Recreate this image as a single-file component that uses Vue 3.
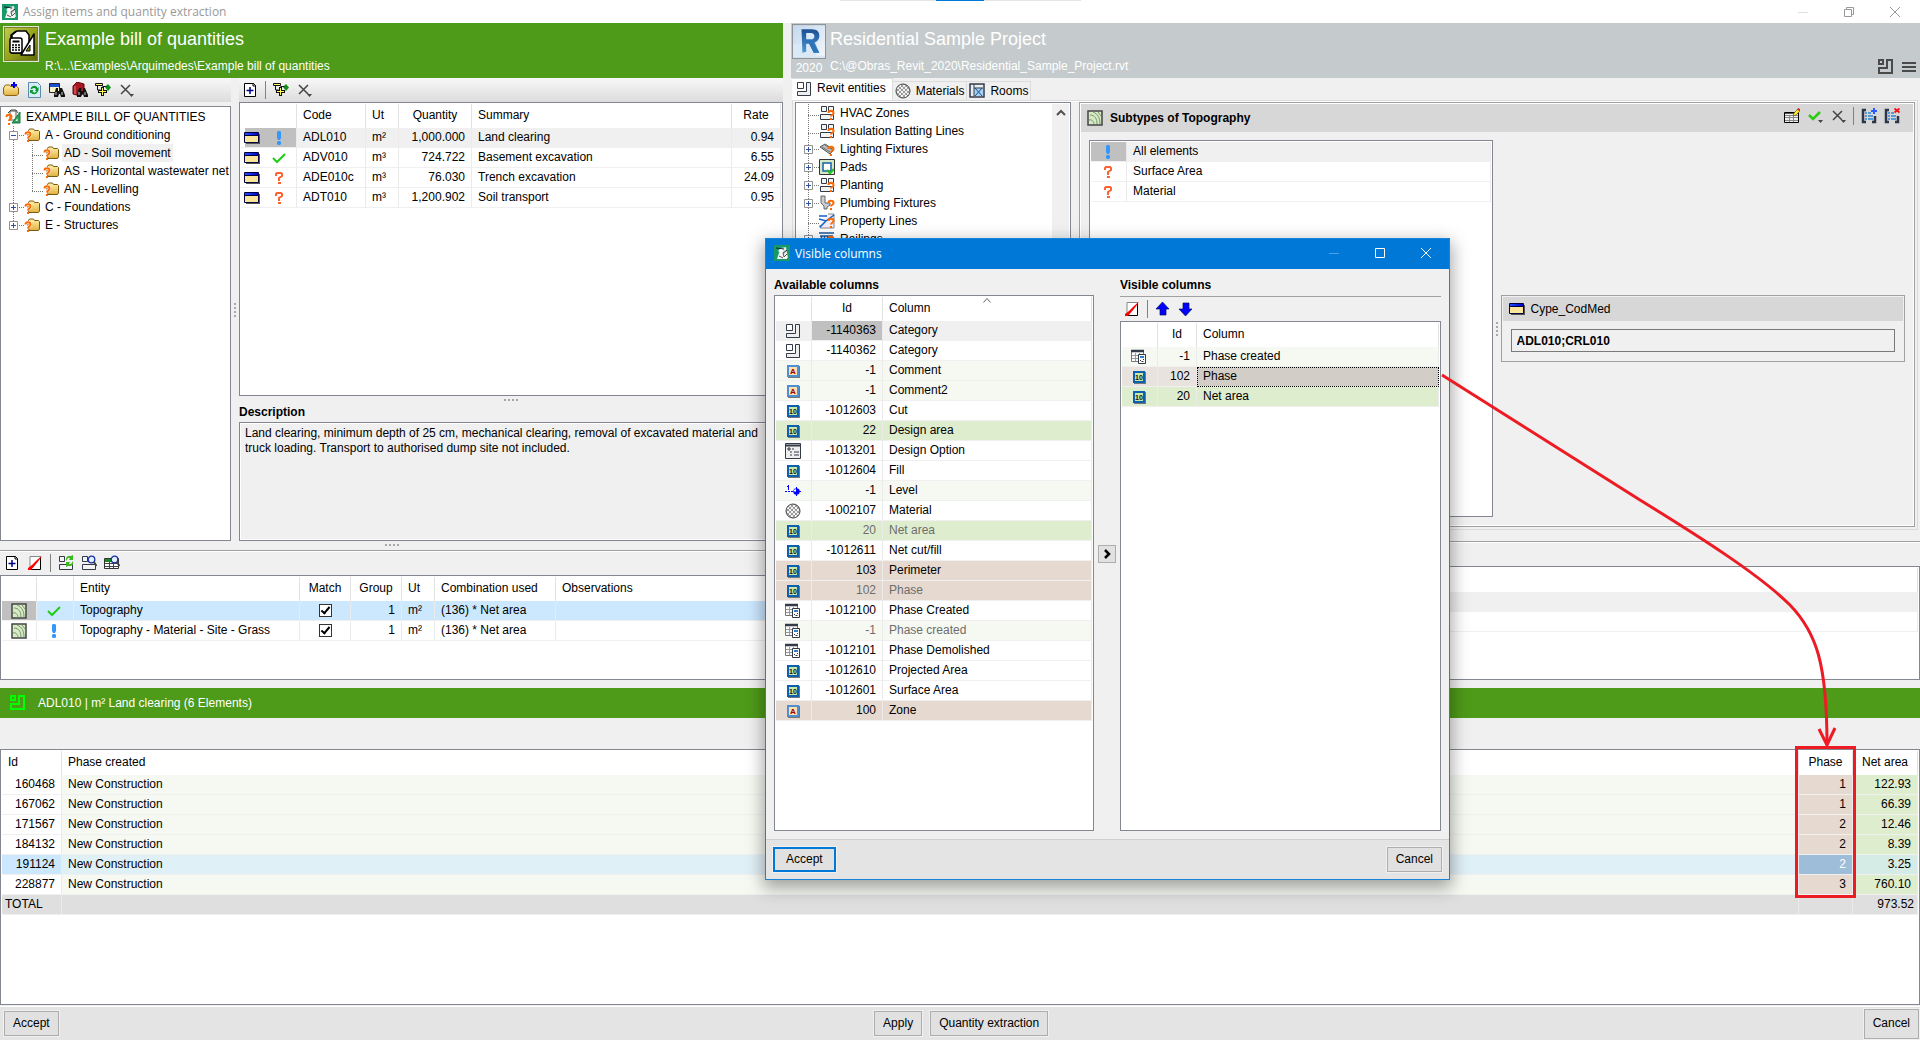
<script setup>
import { ref } from 'vue'

const budgetTools = [
  ['folder-add', 'New chapter'], ['refresh', 'Refresh'], ['find-table', 'Find item'],
  ['find-book', 'Find in catalogue'], ['tree-add', 'Expand tree'], ['clear', 'Clear']
]
const itemTools = [['page-add', 'New item'], null, ['tree-add', 'Expand items'], ['clear', 'Clear']]
const subtypeTools = [['grid-edit', 'Edit table'], ['tick-menu', 'Mark'], ['clear', 'Clear'], null, ['list-add', 'Add columns'], ['list-del', 'Remove columns']]
const entityTools = [['page-add', 'Add entity'], ['page-del', 'Remove entity'], null, ['cat-sync', 'Update'], ['cat-find', 'Find category'], ['table-find', 'Find in table']]
const columnTools = [['page-del', 'Remove column'], null, ['up', 'Move up'], ['down', 'Move down']]

const chapters = [
  { guides: [], icon: 'bill', text: 'EXAMPLE BILL OF QUANTITIES' },
  { guides: ['g-minus'], icon: 'folder-q', text: 'A - Ground conditioning' },
  { guides: ['g-line', 'g-tee'], icon: 'folder-q', text: 'AD - Soil movement', active: true },
  { guides: ['g-line', 'g-tee'], icon: 'folder-q', text: 'AS - Horizontal wastewater net' },
  { guides: ['g-line', 'g-end'], icon: 'folder-q', text: 'AN - Levelling' },
  { guides: ['g-plus'], icon: 'folder-q', text: 'C - Foundations' },
  { guides: ['g-plus-end'], icon: 'folder-q', text: 'E - Structures' }
]
const categories = [
  ['g-tee', 'cat-q', 'HVAC Zones'], ['g-tee', 'cat-q', 'Insulation Batting Lines'],
  ['g-plus', 'light-q', 'Lighting Fixtures'], ['g-plus', 'pad', 'Pads'], ['g-plus', 'cat-q', 'Planting'],
  ['g-plus', 'plumb-q', 'Plumbing Fixtures'], ['g-tee', 'prop-q', 'Property Lines'], ['g-plus', 'rail-q', 'Railings']
]
const items = [
  ['excl', 'ADL010', 'm²', '1,000.000', 'Land clearing', '0.94'],
  ['tick', 'ADV010', 'm³', '724.722', 'Basement excavation', '6.55'],
  ['quest', 'ADE010c', 'm³', '76.030', 'Trench excavation', '24.09'],
  ['quest', 'ADT010', 'm³', '1,200.902', 'Soil transport', '0.95']
]
const subtypes = [['excl', 'All elements'], ['quest', 'Surface Area'], ['quest', 'Material']]
const entities = ref([
  { state: 'tick', name: 'Topography', match: true, group: 1, ut: 'm²', comb: '(136) * Net area' },
  { state: 'excl', name: 'Topography - Material - Site - Grass', match: true, group: 1, ut: 'm²', comb: '(136) * Net area' }
])
const elements = [
  ['160468', '1', '122.93'], ['167062', '1', '66.39'], ['171567', '2', '12.46'],
  ['184132', '2', '8.39'], ['191124', '2', '3.25'], ['228877', '3', '760.10']
]
const available = [
  ['cat', '-1140363', 'Category', 'current'], ['cat', '-1140362', 'Category', ''],
  ['alpha', '-1', 'Comment', 'pale'], ['alpha', '-1', 'Comment2', 'pale'],
  ['num', '-1012603', 'Cut', ''], ['num', '22', 'Design area', 'green'],
  ['option', '-1013201', 'Design Option', ''], ['num', '-1012604', 'Fill', ''],
  ['level', '-1', 'Level', 'pale'], ['sphere', '-1002107', 'Material', ''],
  ['num', '20', 'Net area', 'green used'], ['num', '-1012611', 'Net cut/fill', ''],
  ['num', '103', 'Perimeter', 'brown'], ['num', '102', 'Phase', 'brown used'],
  ['phase', '-1012100', 'Phase Created', ''], ['phase', '-1', 'Phase created', 'pale used'],
  ['phase', '-1012101', 'Phase Demolished', ''], ['num', '-1012610', 'Projected Area', ''],
  ['num', '-1012601', 'Surface Area', ''], ['alpha', '100', 'Zone', 'brown']
]
const visible = [
  ['phase', '-1', 'Phase created', 'pale'], ['num', '102', 'Phase', 'focus'], ['num', '20', 'Net area', 'green']
]
const codMed = ref('ADL010;CRL010')
const description = 'Land clearing, minimum depth of 25 cm, mechanical clearing, removal of excavated material and truck loading. Transport to authorised dump site not included.'
</script>

<template>
  <div class="app">
    <svg class="sprite" aria-hidden="true">
      <defs>
        <linearGradient id="gFolder" x1="0" y1="0" x2="0" y2="1"><stop offset="0" stop-color="#fff0a8" /><stop offset="1" stop-color="#e0b040" /></linearGradient>
        <linearGradient id="gOlive" x1="0" y1="0" x2="1" y2="1"><stop offset="0" stop-color="#c0cc50" /><stop offset=".5" stop-color="#98a41c" /><stop offset="1" stop-color="#5c6808" /></linearGradient>
        <linearGradient id="gR" x1="0" y1="0" x2="0" y2="1"><stop offset="0" stop-color="#1c4e92" /><stop offset="1" stop-color="#4d9ad8" /></linearGradient>
        <linearGradient id="gSky" x1="0" y1="0" x2="1" y2="1"><stop offset="0" stop-color="#c4d8ee" /><stop offset="1" stop-color="#f2f7fc" /></linearGradient>
        <linearGradient id="gBlue" x1="0" y1="0" x2="1" y2="0"><stop offset="0" stop-color="#2050ff" /><stop offset="1" stop-color="#0000c8" /></linearGradient>
        <pattern id="pDots" width="4" height="4" patternUnits="userSpaceOnUse"><rect width="4" height="4" fill="#f4f4f4" /><path d="M0 0h2v2h-2zM2 2h2v2h-2z" fill="#9a9a9a" /></pattern>

        <symbol id="logo" viewBox="0 0 16 16"><rect width="16" height="16" fill="#159a68" /><path d="M7 3l5-1 2 11H5z" fill="#dfe9e4" /><path d="M2 3l8 1M8 9l5-4" stroke="#123" stroke-width="1" /><circle cx="6.500" cy="6" r="2" fill="#fff" /><path d="M3 14l2-6h4l1 3 3-3v6z" fill="#f4f7f5" /><path d="M9 8l1 4 3-3M5 11l4 2" fill="none" stroke="#555" /></symbol>
        <symbol id="calc" viewBox="0 0 36 36"><rect width="36" height="36" fill="#dfe3d8" /><rect x="1.500" y="1.500" width="33" height="33" fill="url(#gOlive)" stroke="#77822a" /><path d="M9 9l5-4h9l3 4v18H9z" fill="#fff" stroke="#000" stroke-width="1.500" /><path d="M8 12V9l5-4" fill="none" stroke="#000" stroke-width="1.500" /><path d="M31 8v21H18z" fill="#fff" stroke="#000" stroke-width="1.500" stroke-linejoin="round" /><path d="M27 19v6h-4z" fill="#8c9818" stroke="#000" /><rect x="7" y="12" width="12" height="15" rx="2" fill="#fff" stroke="#000" stroke-width="1.500" /><path d="M9.500 15.500h7" stroke="#000" stroke-width="2" /><path d="M9 19h2M12 19h2M15 19h2M9 21.500h2M12 21.500h2M15 21.500h2M9 24h2M12 24h2M15 24h2" stroke="#000" stroke-width="1.300" /></symbol>
        <symbol id="revit" viewBox="0 0 34 34"><rect width="34" height="34" fill="url(#gSky)" /><path d="M0 20h9V4h16v28h9v2H0z" fill="#dbe8f5" /><path fill-rule="evenodd" d="M9 4h11c6 0 8 3 8 7 0 4-2 6-5 7l5 11h-6l-5-10h-3v9l-4 1zM14 8v7h5c5 0 5-7 0-7z" fill="url(#gR)" /><path d="M14 15h5l9 14h-6l-5-10h-3z" fill="#2d74b8" /></symbol>

        <symbol id="bill" viewBox="0 0 16 16"><path d="M5 2h6v9H5z" fill="#fff" stroke="#555" /><path d="M3 4l3-3h5l2 3" fill="none" stroke="#444" /><path d="M15 3v11H7z" fill="#2fa05a" stroke="#1a7a40" /><path d="M12.500 9v3h-2z" fill="#fff" /><path d="M1.500 8c0-3 5-3 5 0 0 2-2.500 2-2.500 4" fill="none" stroke="#ff6a00" stroke-width="2" /><path d="M3 14h2v2H3z" fill="#ff6a00" /></symbol>
        <symbol id="folder-q" viewBox="0 0 16 16"><path d="M3.500 5l2-3h4l1 1.500h4l1 1V12l-1 1.500H5z" fill="url(#gFolder)" stroke="#7b5a10" /><path d="M1.500 7.500c0-3 5-3 5 0 0 2-2.500 2-2.500 4" fill="none" stroke="#fff" stroke-width="3" /><path d="M1.500 7.500c0-3 5-3 5 0 0 2-2.500 2-2.500 4" fill="none" stroke="#ff6a00" stroke-width="2" /><path d="M3 13h2v2H3z" fill="#ff6a00" /></symbol>
        <symbol id="folder-add" viewBox="0 0 16 16"><path d="M.5 6l2-3h4l1 1.500h6l2 1.500v6l-2 1.500h-11l-2-1.500z" fill="url(#gFolder)" stroke="#8a6414" /><path d="M11 0v6M8 3h6" stroke="#0000e8" stroke-width="2" /></symbol>
        <symbol id="refresh" viewBox="0 0 16 16"><path d="M2.500 .5h9l3 3v12h-12z" fill="#d8edf8" stroke="#5b8aae" /><path d="M4.500 7c1-4 6-4 7-1l1-1v4H9l1-1.500c-1-2-3-2-4-.5zM12 9c-1 4-6 4-7 1.500l-1 1V8h3.500l-1 1.500c1 1.500 3 1.500 4-.5z" fill="#0c9a30" /></symbol>
        <symbol id="binoc" viewBox="0 0 16 16"><path d="M7 6h2v3h2V6h2l3 7v2h-4l-1-3h-1l-1 3H5v-2z" fill="#111" /><path d="M7 10v3M13 10v3" stroke="#ccc" /></symbol>
        <symbol id="find-table" viewBox="0 0 16 16"><path d="M.5 1.500h10v9H.5z" fill="#f6f1c8" stroke="#222" /><path d="M1 2h9v3H1z" fill="#1c50d0" /><use href="#binoc" /></symbol>
        <symbol id="find-book" viewBox="0 0 16 16"><path d="M1 4l4-4 7 2v9l-4 3-7-2z" fill="#a81822" stroke="#600a10" /><path d="M3 4v8" stroke="#e08088" /><use href="#binoc" /></symbol>
        <symbol id="tree-add" viewBox="0 0 16 16"><path d="M10 5l3-3 3 3.500-3 3.500z" fill="#109018" /><path d="M.5 1.500h7v2h-7z" fill="#ffff70" stroke="#111" /><path d="M2.500 4v4h3M7.500 4.500h4" fill="none" stroke="#111" /><path d="M6 5h3v3h3v3H9v3H6v-3H3V8h3z" fill="#111" /><path d="M7.500 6v7M4 9.500h7" stroke="#ffff50" /></symbol>
        <symbol id="clear" viewBox="0 0 16 16"><path d="M3 3l9 9M12 3l-9 9" stroke="#444" stroke-width="1.500" /><path d="M11 12h5l-2.500 3z" fill="#444" /></symbol>
        <symbol id="page-add" viewBox="0 0 16 16"><path d="M2.500 1.500h9l2 2v11h-11z" fill="#fff" stroke="#000" /><path d="M11 1v3h3" fill="none" stroke="#000" /><path d="M8 5v7M4.500 8.500h7" stroke="#000080" stroke-width="1.500" /></symbol>
        <symbol id="page-del" viewBox="0 0 16 16"><path d="M3 1.500h11v12.500H3z" fill="#fff" /><path d="M3 1.500h11M3 1.500V14" stroke="#888" /><path d="M3 14.500h10.500V2" fill="none" stroke="#000" /><path d="M1 15v-2c4-2 8-8 14-12-3 5-7 9-11 14z" fill="#f00" /></symbol>
        <symbol id="grid-edit" viewBox="0 0 16 16"><path d="M.5 4.500h14v10H.5z" fill="#eee" stroke="#000" /><path d="M1 7.500h13M1 9.500h13M1 12.500h13M5.500 7v7M9.500 7v7" stroke="#888" /><path d="M1 5.500h13" stroke="#555" /><path d="M9 8l1-3 4-4 2 2-4 4z" fill="#ffe820" stroke="#333" stroke-width=".5" /><path d="M13 2l1-2 2 1v2z" fill="#d02020" /></symbol>
        <symbol id="tick-menu" viewBox="0 0 16 16"><path d="M2 7l4 4 7-7" fill="none" stroke="#2bc814" stroke-width="2.500" /><path d="M11 12h5l-2.500 3z" fill="#444" /></symbol>
        <symbol id="list-add" viewBox="0 0 16 16"><path d="M5 2H2v12h3M11 14h3V8" fill="none" stroke="#2d3748" stroke-width="2.500" /><path d="M4 5h2M4 8h2M4 11h2M7 5h3M7 8h5M7 11h5" stroke="#2f86d8" stroke-width="1.500" /><path d="M13 0v6M10 3h6" stroke="#2b5cff" stroke-width="2" /></symbol>
        <symbol id="list-del" viewBox="0 0 16 16"><path d="M5 2H2v12h3M11 14h3V8" fill="none" stroke="#2d3748" stroke-width="2.500" /><path d="M4 5h2M4 8h2M4 11h2M7 5h3M7 8h5M7 11h5" stroke="#2f86d8" stroke-width="1.500" /><path d="M10.500 .5l5 4M15.500 .5l-5 4" stroke="#f01010" stroke-width="1.800" /></symbol>
        <symbol id="up" viewBox="0 0 16 16"><path d="M7.500 1L14 8h-3v6H5V8H1z" fill="#00f" stroke="#001060" stroke-width=".7" /></symbol>
        <symbol id="down" viewBox="0 0 16 16"><path d="M7.500 15L14 8h-3V2H5v6H1z" fill="#00f" stroke="#001060" stroke-width=".7" /></symbol>

        <symbol id="cat" viewBox="0 0 16 16"><path d="M1.500 1.500h6v6h-6z" fill="#fff" stroke="#333a48" /><path d="M10.500 1.500h4v13h-13v-4h9z" fill="#eee" stroke="#333a48" /></symbol>
        <symbol id="catbold" viewBox="0 0 16 16"><path d="M1 1h4v4H1zM9 1h5v13H1V9h8z" fill="none" stroke="currentColor" stroke-width="2" /></symbol>
        <symbol id="quads" viewBox="0 0 16 16"><path d="M2.500 1.500h5v5h-5zM9.500 1.500h5v5h-5zM1.500 9.500h13v5h-13z" fill="#f4f4f4" stroke="#333a48" /></symbol>
        <symbol id="qmark" viewBox="0 0 16 16"><path d="M9.500 8c0-3 5-3 5 0 0 2-2.500 1.500-2.500 3.500" fill="none" stroke="#ff6a00" stroke-width="2" /><path d="M11 13h2v2h-2z" fill="#ff6a00" /></symbol>
        <symbol id="cat-q" viewBox="0 0 16 16"><use href="#quads" /><use href="#qmark" /></symbol>
        <symbol id="light-q" viewBox="0 0 16 16"><path d="M1 6l5-3 9 6-4 4z" fill="#b8bcc0" stroke="#555" /><path d="M3 6l8 5M6 4l8 5" stroke="#777" /><use href="#qmark" /></symbol>
        <symbol id="pad" viewBox="0 0 16 16"><path d="M.5 .5h15v15H.5z" fill="#d4e8c4" stroke="#333" /><path d="M4 4h8v8H4z" fill="#fff" stroke="#1560a8" stroke-width="1.500" /><path d="M8 11l3 3 4-4" fill="none" stroke="#20c020" stroke-width="2" /></symbol>
        <symbol id="plumb-q" viewBox="0 0 16 16"><path d="M2 1h4v7h5v2l-3 2v2H5v-3L2 8z" fill="#c9ccd0" stroke="#666" /><use href="#qmark" /></symbol>
        <symbol id="prop-q" viewBox="0 0 16 16"><path d="M9 1h6v14H1v-3" fill="#eef" stroke="#888" /><path d="M0 3h8M0 6l7 2 8-6M7 8l-6 6" fill="none" stroke="#1560c0" stroke-width="1.500" /><use href="#qmark" /></symbol>
        <symbol id="rail-q" viewBox="0 0 16 16"><path d="M0 2h15M1 5h13M2.500 5v10M5.500 5v10M8.500 5v10M12.500 5v3" stroke="#1c5a9c" stroke-width="1.500" /><use href="#qmark" /></symbol>
        <symbol id="sphere" viewBox="0 0 16 16"><circle cx="8" cy="8" r="7" fill="url(#pDots)" stroke="#444" /></symbol>
        <symbol id="rooms" viewBox="0 0 16 16"><path d="M1 1h14v13H1z" fill="#e8edf2" stroke="#333a48" stroke-width="1.500" /><path d="M5 5h9v8H5z" fill="#a8d0f4" /><path d="M5 1v12M5 5h9" stroke="#333a48" /><path d="M6 5l7 8M13 5l-7 8" stroke="#1c4f88" /></symbol>
        <symbol id="topo" viewBox="0 0 16 16"><path d="M1 1h14v14H1z" fill="#d6ebc4" stroke="#444" stroke-width="1.500" /><path d="M2 10c3-1 5 2 5 4M3 5c5 0 7 4 7 9M6 2c5 2 7 6 7 12M11 2l3 4" fill="none" stroke="#7a9470" /></symbol>
        <symbol id="win" viewBox="0 0 16 16"><path d="M2 4h14v10H2z" fill="#555" /><path d="M.5 2.500h14v10H.5z" fill="#fbe59a" stroke="#000040" /><path d="M1 3h13v2H1z" fill="url(#gBlue)" /><path d="M1 5.500h13" stroke="#000040" /></symbol>
        <symbol id="excl" viewBox="0 0 16 16"><path d="M6 2l1-1h2l1 1v6l-1 2H7L6 8zM7 11h2l1 1v2l-1 1H7l-1-1v-2z" fill="#3398fb" /></symbol>
        <symbol id="tick" viewBox="0 0 16 16"><path d="M2 8l4 4 8-8" fill="none" stroke="#22cc16" stroke-width="2" /></symbol>
        <symbol id="quest" viewBox="0 0 16 16"><path d="M5 6V4l1-1h4l1 1v2L8 8v3" fill="none" stroke="#fe6230" stroke-width="2" /><path d="M7 12h3v2H7z" fill="#fe6230" /></symbol>
        <symbol id="alpha" viewBox="0 0 16 16"><path d="M3 3h12v12H3z" fill="#777" /><path d="M3 3h10v10H3z" fill="#fddfb0" stroke="#5090d0" stroke-width="2" /><text x="8" y="11" text-anchor="middle" font-family="Liberation Sans, sans-serif" font-size="8" font-weight="bold" fill="#9a0000">A</text></symbol>
        <symbol id="num" viewBox="0 0 16 16"><path d="M3 3h12v12H3z" fill="#777" /><path d="M3 3h10v10H3z" fill="#c8e6a8" stroke="#0c60b0" stroke-width="2" /><text x="8" y="11" text-anchor="middle" font-family="Liberation Sans, sans-serif" font-size="7" font-weight="bold" fill="#111">10</text></symbol>
        <symbol id="option" viewBox="0 0 16 16"><path d="M.5 .5h15v15H.5z" fill="#eee" stroke="#333a48" /><path d="M0 2.500h16" stroke="#333a48" stroke-width="2" /><path d="M3 5h2v2H3zM7 6h2M5 9h2M9 9h5M5 12h2M9 12h5" fill="none" stroke="#333a48" /></symbol>
        <symbol id="level" viewBox="0 0 16 16"><path d="M0 8.500h8" stroke="#00f" stroke-dasharray="2 1" /><path d="M2 3.500h1.500M3.500 2v5" stroke="#00f" /><circle cx="11.500" cy="8.500" r="3.200" fill="#00f" /><path d="M11.500 4v9M7.500 8.500H16" stroke="#00f" /><path d="M11 8.500V6a3 3 0 0 0-2.500 2.500z" fill="#fff" /></symbol>
        <symbol id="phase" viewBox="0 0 16 16"><path d="M.5 1.500h12v11H.5z" fill="#fafafa" stroke="#777" /><path d="M0 2h13" stroke="#333a48" stroke-width="2.500" /><path d="M1 6.500h11M1 9.500h11M4.500 4v8M8.500 4v8" stroke="#999" /><path d="M7.500 5.500h7v9h-7z" fill="#fff" stroke="#333a48" /><path d="M9 8h4" stroke="#2f7fd0" stroke-width="2" /><path d="M9 11.500h1M12 10.500h1M10.500 12.500h2" stroke="#333" /></symbol>
        <symbol id="cat-sync" viewBox="0 0 16 16"><path d="M1.500 1.500h5v5h-5zM1.500 9.500h13v5h-13z" fill="#f4f4f4" stroke="#333a48" /><path d="M8 6V3l2-2h3l2-1v5h-4l1-2h-2zM15 6v3l-2 2h-3l-2 1V7h4l-1 2h2z" fill="#3db81e" /></symbol>
        <symbol id="cat-find" viewBox="0 0 16 16"><path d="M1.500 1.500h5v5h-5zM1.500 9.500h13v5h-13z" fill="#f4f4f4" stroke="#333a48" /><circle cx="10.500" cy="4.500" r="3.300" fill="#e2f0fc" stroke="#1830a8" stroke-width="1.300" /><path d="M13 7l2.500 4" stroke="#444" stroke-width="2" /></symbol>
        <symbol id="table-find" viewBox="0 0 16 16"><path d="M.5 3.500h14v10H.5z" fill="#fff" stroke="#333" /><path d="M1 4h7v3H1z" fill="#109018" /><path d="M1 8.500h13M1 11.500h13M5.500 7v6M9.500 7v6" stroke="#444" /><circle cx="10.500" cy="4.500" r="3.300" fill="#e2f0fc" stroke="#1830a8" stroke-width="1.300" /><path d="M13 7l2.500 4" stroke="#444" stroke-width="2" /></symbol>

        <symbol id="box9" viewBox="0 0 19 18"><path d="M4.500 5.500h8v8h-8z" fill="#fff" stroke="#919191" /><path d="M6 9.500h5" stroke="#3050a0" /></symbol>
        <symbol id="g-line" viewBox="0 0 19 18"><path d="M8.500 0v18" stroke="#777" stroke-dasharray="1 1" /></symbol>
        <symbol id="g-tee" viewBox="0 0 19 18"><path d="M8.500 0v18M8 11.500h11" stroke="#777" stroke-dasharray="1 1" /></symbol>
        <symbol id="g-end" viewBox="0 0 19 18"><path d="M8.500 0v11M8 11.500h11" stroke="#777" stroke-dasharray="1 1" /></symbol>
        <symbol id="g-minus" viewBox="0 0 19 18"><path d="M8.500 0v18M14 9.500h5" stroke="#777" stroke-dasharray="1 1" /><use href="#box9" /></symbol>
        <symbol id="g-plus" viewBox="0 0 19 18"><path d="M8.500 0v18M14 9.500h5" stroke="#777" stroke-dasharray="1 1" /><use href="#box9" /><path d="M8.500 7v5" stroke="#3050a0" /></symbol>
        <symbol id="g-plus-end" viewBox="0 0 19 18"><path d="M8.500 0v5M14 9.500h5" stroke="#777" stroke-dasharray="1 1" /><use href="#box9" /><path d="M8.500 7v5" stroke="#3050a0" /></symbol>
      </defs>
    </svg>

    <header class="titlebar">
      <svg class="ic"><use href="#logo" /></svg>
      <span class="wtitle">Assign items and quantity extraction</span>
      <span class="tabhint"></span>
      <div class="wctl">
        <button aria-label="Minimise" class="faint"><svg viewBox="0 0 10 10"><path d="M0 5.500h10" /></svg></button>
        <button aria-label="Restore"><svg viewBox="0 0 10 10"><path d="M.5 2.500h7v7h-7zM2.500 2V.5h7v7H8" /></svg></button>
        <button aria-label="Close"><svg viewBox="0 0 10 10"><path d="M0 0l10 10M10 0L0 10" /></svg></button>
      </div>
    </header>

    <div class="upper">
      <section class="left">
        <div class="hero green">
          <svg class="ic36"><use href="#calc" /></svg>
          <div class="herotext"><h1>Example bill of quantities</h1><p>R:\...\Examples\Arquimedes\Example bill of quantities</p></div>
        </div>
        <div class="split">
          <div class="col">
            <div class="tb shaded">
              <button v-for="t in budgetTools" :key="t[0]" :aria-label="t[1]"><svg class="ic"><use :href="'#' + t[0]" /></svg></button>
            </div>
            <ul class="box tree chapters">
              <li v-for="c in chapters" :key="c.text">
                <svg v-for="(g, i) in c.guides" :key="i" class="guide"><use :href="'#' + g" /></svg>
                <svg class="ic"><use :href="'#' + c.icon" /></svg>
                <span :class="{ active: c.active }">{{ c.text }}</span>
              </li>
            </ul>
          </div>
          <div class="vgrip"><i></i></div>
          <div class="col">
            <div class="tb shaded">
              <template v-for="(t, i) in itemTools" :key="i">
                <button v-if="t" :aria-label="t[1]"><svg class="ic"><use :href="'#' + t[0]" /></svg></button>
                <hr v-else>
              </template>
            </div>
            <div class="box items">
              <table>
                <colgroup><col class="w56"><col class="w69"><col class="w33"><col class="w73"><col><col class="w49"></colgroup>
                <thead><tr><th></th><th>Code</th><th>Ut</th><th class="c">Quantity</th><th>Summary</th><th class="c">Rate</th></tr></thead>
                <tbody>
                  <tr v-for="(r, i) in items" :key="r[1]" :class="{ current: i === 0 }">
                    <td class="pair" :class="{ mark: i === 0 }"><div><svg class="ic"><use href="#win" /></svg><svg class="ic"><use :href="'#' + r[0]" /></svg></div></td>
                    <td>{{ r[1] }}</td><td>{{ r[2] }}</td><td class="r">{{ r[3] }}</td><td>{{ r[4] }}</td><td class="r">{{ r[5] }}</td>
                  </tr>
                </tbody>
              </table>
            </div>
            <div class="desclabel"><i class="hgrip"></i><label for="desc">Description</label></div>
            <textarea id="desc" class="box desc" readonly :value="description"></textarea>
          </div>
        </div>
        <div class="foot"><i class="hgrip"></i></div>
      </section>

      <section class="right">
        <div class="hero grey">
          <div class="revit"><svg><use href="#revit" /></svg><span>2020</span></div>
          <div class="herotext"><h1>Residential Sample Project</h1><p>C:\@Obras_Revit_2020\Residential_Sample_Project.rvt</p></div>
          <div class="heroctl">
            <button aria-label="Show entities"><svg class="ic"><use href="#catbold" /></svg></button>
            <button aria-label="Menu"><svg class="ic" viewBox="0 0 16 16"><path d="M1 4h14M1 8h14M1 12h14" stroke="#4a4a4a" stroke-width="2" /></svg></button>
          </div>
        </div>
        <div class="tabs" role="tablist">
          <button role="tab" aria-selected="true" class="on"><svg class="ic"><use href="#cat" /></svg>Revit entities</button>
          <button role="tab"><svg class="ic"><use href="#sphere" /></svg>Materials</button>
          <button role="tab"><svg class="ic"><use href="#rooms" /></svg>Rooms</button>
        </div>
        <div class="page">
          <ul class="box tree cats">
            <li v-for="c in categories" :key="c[2]">
              <svg class="guide"><use :href="'#' + c[0]" /></svg><svg class="ic"><use :href="'#' + c[1]" /></svg><span>{{ c[2] }}</span>
            </li>
            <li class="scroll"><svg viewBox="0 0 17 17"><path d="M5 11l4-4 4 4" fill="none" stroke="#505050" stroke-width="2" /></svg></li>
          </ul>
          <div class="sub">
            <div class="subhead">
              <svg class="ic"><use href="#topo" /></svg><strong>Subtypes of Topography</strong>
              <div class="tb">
                <template v-for="(t, i) in subtypeTools" :key="i">
                  <button v-if="t" :aria-label="t[1]"><svg class="ic"><use :href="'#' + t[0]" /></svg></button>
                  <hr v-else>
                </template>
              </div>
            </div>
            <div class="subbody">
              <div class="box">
                <table>
                  <colgroup><col class="w36"><col></colgroup>
                  <tbody>
                    <tr v-for="(s, i) in subtypes" :key="s[1]" :class="{ current: i === 0 }">
                      <td class="c" :class="{ solid: i === 0 }"><svg class="ic"><use :href="'#' + s[0]" /></svg></td><td>{{ s[1] }}</td>
                    </tr>
                  </tbody>
                </table>
              </div>
              <div class="vgrip"><i></i></div>
              <div class="cype">
                <div class="cypehead"><svg class="ic"><use href="#win" /></svg><label for="cod">Cype_CodMed</label></div>
                <input id="cod" v-model="codMed" type="text">
              </div>
            </div>
          </div>
        </div>
      </section>
    </div>

    <div class="middle">
      <section class="ents">
        <div class="tb">
          <template v-for="(t, i) in entityTools" :key="i">
            <button v-if="t" :aria-label="t[1]"><svg class="ic"><use :href="'#' + t[0]" /></svg></button>
            <hr v-else>
          </template>
        </div>
        <div class="box">
          <table>
            <colgroup><col class="w35"><col class="w37"><col class="w226"><col class="w51"><col class="w51"><col class="w33"><col class="w121"><col></colgroup>
            <thead><tr><th></th><th></th><th>Entity</th><th class="c">Match</th><th class="c">Group</th><th>Ut</th><th>Combination used</th><th>Observations</th></tr></thead>
            <tbody>
              <tr v-for="(e, i) in entities" :key="e.name" :class="{ picked: i === 0 }">
                <td class="c" :class="{ solid: i === 0 }"><svg class="ic"><use href="#topo" /></svg></td>
                <td class="c"><svg class="ic"><use :href="'#' + e.state" /></svg></td>
                <td>{{ e.name }}</td>
                <td class="c"><input v-model="e.match" type="checkbox" :aria-label="'Match ' + e.name"></td>
                <td class="r">{{ e.group }}</td><td>{{ e.ut }}</td><td>{{ e.comb }}</td><td></td>
              </tr>
            </tbody>
          </table>
        </div>
      </section>
      <section class="ents raised">
        <div class="tb"></div>
        <div class="box">
          <table>
            <thead><tr><th></th></tr></thead>
            <tbody><tr class="current"><td></td></tr><tr><td></td></tr></tbody>
          </table>
        </div>
      </section>
    </div>

    <div class="band"><svg class="ic"><use href="#catbold" /></svg>ADL010 | m² Land clearing (6 Elements)</div>

    <div class="box elements">
      <table>
        <colgroup><col class="w60"><col><col class="w54"><col class="w65"></colgroup>
        <thead><tr><th>Id</th><th>Phase created</th><th class="c">Phase</th><th class="c">Net area</th></tr></thead>
        <tbody>
          <tr v-for="(e, i) in elements" :key="e[0]" :class="{ sel: i === 4 }">
            <td class="r">{{ e[0] }}</td><td class="pale">New Construction</td><td class="r brown">{{ e[1] }}</td><td class="r green">{{ e[2] }}</td>
          </tr>
          <tr class="total"><td>TOTAL</td><td></td><td></td><td class="r">973.52</td></tr>
        </tbody>
      </table>
    </div>

    <footer class="bar">
      <button class="btn">Accept</button>
      <div class="mid"><button class="btn">Apply</button><button class="btn">Quantity extraction</button></div>
      <button class="btn tall">Cancel</button>
    </footer>

    <div class="dialog" role="dialog" aria-label="Visible columns">
      <div class="dtitle">
        <svg class="ic"><use href="#logo" /></svg><span class="wtitle">Visible columns</span>
        <div class="wctl">
          <button aria-label="Minimise" class="faint"><svg viewBox="0 0 10 10"><path d="M0 5.500h10" /></svg></button>
          <button aria-label="Maximise"><svg viewBox="0 0 10 10"><path d="M.5 .5h9v9h-9z" /></svg></button>
          <button aria-label="Close"><svg viewBox="0 0 10 10"><path d="M0 0l10 10M10 0L0 10" /></svg></button>
        </div>
      </div>
      <div class="dbody">
        <div class="dcol">
          <strong>Available columns</strong>
          <div class="box">
            <table>
              <colgroup><col class="w36"><col class="w71"><col></colgroup>
              <thead><tr><th></th><th class="c">Id</th><th class="sorted">Column<svg viewBox="0 0 8 5"><path d="M.5 4.500l3.500-4 3.500 4" fill="none" stroke="#666" /></svg></th></tr></thead>
              <tbody>
                <tr v-for="(a, i) in available" :key="i" :class="a[3]">
                  <td class="c"><svg class="ic"><use :href="'#' + a[0]" /></svg></td><td class="r" :class="{ solid: i === 0 }">{{ a[1] }}</td><td>{{ a[2] }}</td>
                </tr>
              </tbody>
            </table>
          </div>
        </div>
        <div class="move"><button aria-label="Add column"><svg viewBox="0 0 16 16"><path d="M6 4l4 4-4 4" fill="none" stroke="#000" stroke-width="2.500" /></svg></button></div>
        <div class="dcol">
          <strong>Visible columns</strong>
          <div class="tb ruled">
            <template v-for="(t, i) in columnTools" :key="i">
              <button v-if="t" :aria-label="t[1]"><svg class="ic"><use :href="'#' + t[0]" /></svg></button>
              <hr v-else>
            </template>
          </div>
          <div class="box">
            <table>
              <colgroup><col class="w36"><col class="w39"><col></colgroup>
              <thead><tr><th></th><th class="c">Id</th><th>Column</th></tr></thead>
              <tbody>
                <tr v-for="v in visible" :key="v[1]" :class="v[3]">
                  <td class="c"><svg class="ic"><use :href="'#' + v[0]" /></svg></td><td class="r">{{ v[1] }}</td><td>{{ v[2] }}</td>
                </tr>
              </tbody>
            </table>
          </div>
        </div>
      </div>
      <div class="dfoot"><button class="btn primary">Accept</button><button class="btn">Cancel</button></div>
    </div>

    <svg class="callout" viewBox="0 0 420 540" fill="none" stroke="#ed1c24" stroke-width="3" aria-hidden="true">
      <path d="M2 15L200 140C260 177 320 215 350 245C377 273 387 305 387 385" />
      <path d="M379 369l8 16 8-17" />
      <path d="M356.500 387.500h58v149h-58z" />
    </svg>
  </div>
</template>

<style>
body { margin: 0; }
</style>

<style scoped>
.app {
  position: relative;
  display: grid;
  grid-template-rows: 23px 527fr 138fr 30px 31px 257fr 34px;
  grid-template-columns: minmax(0, 1fr);
  height: 100vh;
  min-height: 940px;
  overflow: hidden;
  background: #f0f0f0;
  color: #000;
  font: 12px/15px "Liberation Sans", Arial, sans-serif;
}
.app * { box-sizing: border-box; }
.sprite { position: absolute; width: 0; height: 0; }
.ic { display: block; flex: none; width: 16px; height: 16px; }
button { margin: 0; padding: 0; border: 0; background: none; color: inherit; font: inherit; }
h1, p, ul { margin: 0; padding: 0; list-style: none; }

.titlebar { position: relative; display: flex; align-items: center; padding-left: 2px; background: #fff; color: #999; }
.wtitle { margin-left: 5px; font-family: "Open Sans", "Noto Sans", sans-serif; }
.tabhint { position: absolute; top: 0; left: 840px; width: 241px; height: 1px; background: linear-gradient(90deg, #e5e5e5 96px, #0078d7 96px 144px, #e5e5e5 144px); }
.wctl { display: flex; gap: 36px; margin-left: auto; padding-right: 20px; }
.wctl button { width: 10px; height: 10px; }
.wctl svg { display: block; width: 10px; height: 10px; fill: none; stroke: currentColor; }
.wctl .faint { opacity: .3; }

.upper { display: grid; grid-template-columns: 783fr 1129fr; gap: 8px; min-height: 0; }
.left, .right, .col { display: flex; flex-direction: column; min-width: 0; min-height: 0; }
.hero { display: flex; flex: none; height: 55px; color: #fff; }
.green.hero { padding: 3px; background: #4e9a19; }
.grey.hero { background: #c5cbcd; padding: 1px; }
.ic36 { width: 36px; height: 36px; }
.herotext { margin-left: 6px; }
.green .herotext { margin-top: -3px; }
.grey .herotext { margin-left: 4px; margin-top: -1px; }
h1 { margin-top: 4px; font-size: 18px; line-height: 24px; font-weight: normal; }
p { margin-top: 8px; }
.revit { width: 34px; }
.revit svg { display: block; width: 34px; height: 35px; border: 1px solid #8c9499; }
.revit span { display: block; margin-top: 2px; text-align: center; }
.heroctl { display: flex; align-items: flex-end; gap: 7px; margin-left: auto; padding: 0 2px 2px 0; color: #4a4a4a; }

.split { display: grid; flex: 1; grid-template-columns: 231fr 8px 544fr; min-height: 0; }
.tb { display: flex; flex: none; align-items: center; gap: 7px; height: 24px; padding-left: 3px; }
.tb hr { width: 1px; height: 18px; margin: 0; border: 0; background: #808080; }
.tb.shaded { padding-bottom: 1px; background: linear-gradient(#f8f8f8, #dcdcdc); }
.box { min-width: 0; min-height: 0; padding: 1px; overflow: hidden; border: 1px solid #828790; background: #fff; }
.chapters { flex: 1; margin-top: 4px; }
.vgrip { display: flex; align-items: center; justify-content: center; }
.vgrip i { width: 2px; height: 14px; background: repeating-linear-gradient(#a8a8a8 0 2px, transparent 2px 4px); }
.hgrip { display: block; width: 14px; height: 2px; margin: 0 auto; background: repeating-linear-gradient(90deg, #a8a8a8 0 2px, transparent 2px 4px); }
.items { flex: 290 1 0; }
.desclabel { flex: none; height: 26px; padding-top: 3px; font-weight: bold; }
.desclabel label { display: block; margin-top: 4px; }
.desc { display: block; flex: 111 1 0; padding: 3px 5px; resize: none; outline: none; background: #f0f0f0; color: inherit; font: inherit; box-shadow: inset 0 0 0 1px #fff; }
.foot { flex: none; height: 9px; padding-top: 3px; }

.tree li { display: flex; align-items: center; height: 18px; padding-left: 3px; white-space: nowrap; }
.tree .guide { flex: none; width: 19px; height: 18px; }
.tree span { margin-left: 3px; padding: 0 2px; line-height: 18px; }
.tree .active { background: #f0f0f0; }

table { width: 100%; table-layout: fixed; border-collapse: separate; border-spacing: 0; }
th, td { padding: 0 6px; overflow: hidden; border-right: 1px solid #ebebeb; font-weight: normal; text-align: left; white-space: nowrap; }
th { height: 24px; padding-bottom: 2px; border-color: #e2e2e2; }
td { height: 20px; border-bottom: 1px solid #f0f0f0; }
.c { padding-right: 0; padding-left: 0; text-align: center; }
.c .ic { margin-left: 9px; }
.r { text-align: right; }
.pair { padding: 0; }
.pair div { display: flex; gap: 11px; padding-left: 3px; }
.w33 { width: 33px; } .w35 { width: 35px; } .w36 { width: 36px; } .w37 { width: 37px; } .w39 { width: 39px; } .w49 { width: 49px; }
.w51 { width: 51px; } .w54 { width: 54px; } .w56 { width: 56px; } .w60 { width: 60px; }
.w65 { width: 65px; } .w69 { width: 69px; } .w71 { width: 71px; } .w73 { width: 73px; } .w121 { width: 121px; } .w226 { width: 226px; }
.current td { background: #f0f0f0; }
.current .mark { background: linear-gradient(90deg, #fff 4px, #c0c0c0 4px); }
.picked td { background: #cce8ff; }
tr td.solid { background: #c0c0c0; }
.pale, .pale td { background: #f6f9f2; }
td.green, .green td { background: #dfedcf; }
.brown, .brown td { background: #e6d9d0; }
.used td { color: #6d6d6d; }

.tabs { display: flex; flex: none; align-items: flex-end; height: 22px; padding-left: 1px; }
.tabs button { display: flex; align-items: center; gap: 5px; height: 19px; padding: 0 2px; border: 1px solid #dcdcdc; border-bottom: 0; border-left: 0; }
.tabs .on { height: 22px; padding: 0 6px 2px 4px; background: #fff; }
.page { display: grid; flex: 1; grid-template-columns: 276fr 836fr; gap: 8px; min-height: 0; margin: 0 2px 20px 1px; padding: 1px 2px; border: 1px solid #dcdcdc; background: linear-gradient(#fff 1px, #f0f0f0 1px); }
.cats { position: relative; }
.tree .scroll { position: absolute; top: 1px; right: 1px; bottom: 1px; width: 17px; height: auto; padding: 0; align-items: flex-start; background: #f0f0f0; }
.sub { display: flex; flex-direction: column; min-width: 0; margin-bottom: 1px; padding: 1px; border: 1px solid #a0a0a0; background: #fff; }
.subhead { display: flex; flex: none; align-items: center; height: 28px; padding: 0 13px 0 6px; background: #d7d7d7; }
.subhead strong { margin-left: 7px; }
.subhead .tb { margin-bottom: 4px; margin-left: auto; }
.subbody { display: grid; flex: 1; grid-template-columns: 404fr 8px 405fr; padding: 8px; background: #f0f0f0; min-height: 0; }
.cype { align-self: center; padding: 1px; border: 1px solid #a0a0a0; background: #f0f0f0; }
.cypehead { display: flex; align-items: center; gap: 6px; height: 24px; padding-left: 6px; background: #d7d7d7; }
.cype input { display: block; width: calc(100% - 16px); height: 23px; margin: 8px; padding: 0 5px; border: 1px solid #7a7a7a; outline: none; background: #f0f0f0; color: #000; font: bold 12px "Liberation Sans", Arial, sans-serif; }

.middle { display: grid; grid-template-columns: 1200fr 720fr; min-height: 0; }
.ents { display: flex; flex-direction: column; min-width: 0; padding-bottom: 8px; border-top: 1px solid #a0a0a0; }
.ents .box { flex: 1; border-right: 0; }
.ents .tb { padding-bottom: 1px; padding-left: 4px; border-top: 1px solid #fff; }
.raised { margin-top: -9px; }
.raised .box { border-right: 1px solid #828790; border-left: 0; }
input[type="checkbox"] { position: relative; display: block; width: 13px; height: 13px; margin: 0 auto; appearance: none; border: 1px solid #333; background: #fff; }
input[type="checkbox"]:checked::after { content: ""; position: absolute; top: 0; left: 3px; width: 3px; height: 7px; border: solid #000; border-width: 0 2px 2px 0; transform: rotate(40deg); }

.band { display: flex; align-items: center; gap: 12px; padding-left: 10px; background: #4e9a19; color: #fff; }
.band .ic { color: #0f0; }
.elements { grid-row: 6; margin-bottom: 1px; }
.sel td { background: #cce8ff; }
.sel .pale { background: #e0f0f7; }
.sel .brown { background: #9dbdd9; color: #fff; }
.sel td.green { background: #d5ebe5; }
.total td { padding: 0 3px; background: #dfdfdf; }
.bar { display: flex; grid-row: 7; align-items: center; justify-content: space-between; padding: 0 1px 0 4px; border-top: 1px solid #fff; background: #e4e4e4; }
.mid { display: flex; gap: 8px; }
.btn { height: 25px; padding: 0 8px; border: 1px solid #adadad; outline: 1px solid #f0f0f0; background: #e1e1e1; }
.tall { height: 30px; }
.btn.primary { padding: 0 11px; border: 2px solid #0078d7; }

.dialog { position: absolute; top: 238px; left: 765px; width: 685px; border: 1px solid #1883d7; background: #f0f0f0; box-shadow: 0 6px 16px 2px rgba(0, 0, 0, .35); }
.dtitle { display: flex; align-items: center; height: 30px; padding-bottom: 2px; padding-left: 8px; background: #0078d7; color: #fff; }
.dtitle .wctl { padding-right: 18px; }
.dbody { display: grid; grid-template-columns: 320px 26px 1fr; padding: 8px; }
.dcol { display: flex; flex-direction: column; }
.dcol strong { height: 18px; line-height: 16px; }
.dcol .box { flex: 1; min-height: 510px; }
.dcol:first-child .box { min-height: 536px; }
.ruled { height: 25px; margin-top: 1px; padding-left: 4px; border-top: 1px solid #a0a0a0; }
.sorted { position: relative; }
.sorted svg { position: absolute; top: 1px; left: calc(50% - 4px); width: 8px; height: 5px; }
.move { display: flex; align-items: center; justify-content: center; }
.move button { width: 18px; height: 18px; border: 1px solid #adadad; background: #e1e1e1; }
.move svg { display: block; width: 16px; height: 16px; }
.focus td { background: #e9e3df; }
.focus td:last-child { background: #d2cdc7; outline: 1px dotted #000; outline-offset: -1px; }
.dfoot { display: flex; justify-content: space-between; padding: 7px; border-top: 1px solid #cfcfcf; background: #e4e4e4; }

.callout { position: absolute; top: 360px; right: 60px; width: 420px; height: 540px; pointer-events: none; }
</style>
